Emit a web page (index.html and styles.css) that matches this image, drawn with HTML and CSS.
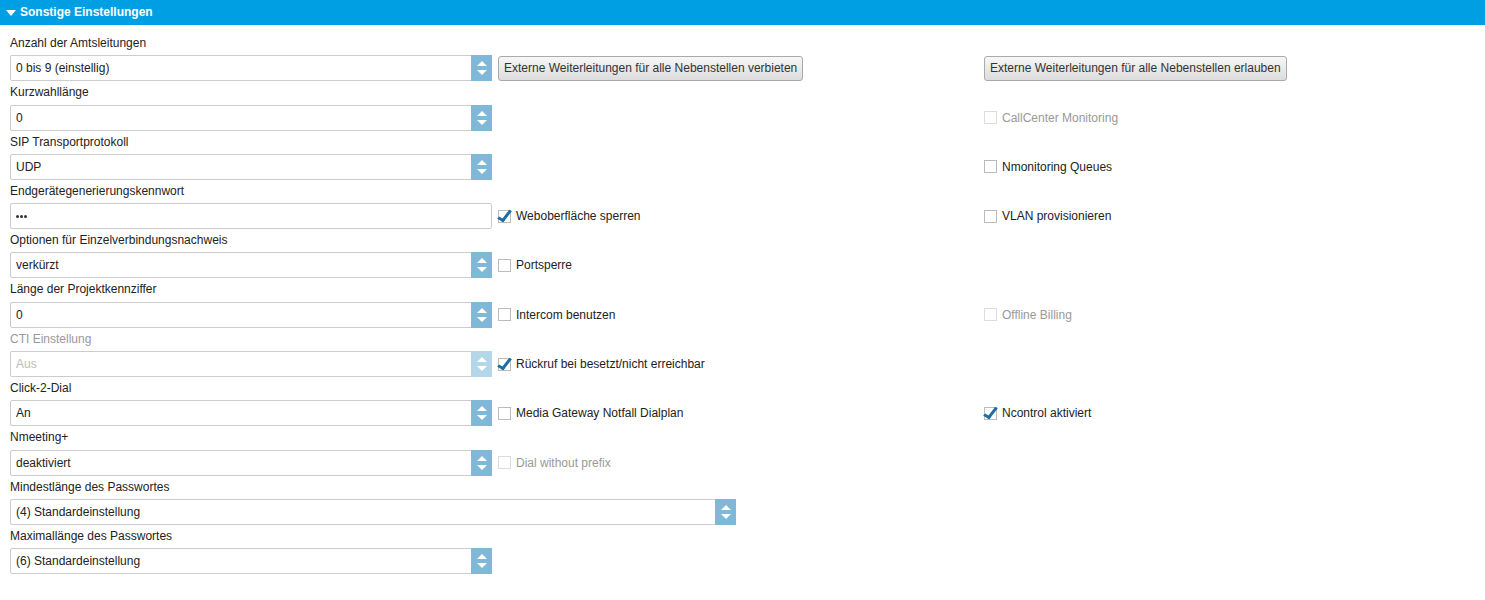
FILE: index.html
```html
<!DOCTYPE html>
<html lang="de">
<head>
    <meta charset="UTF-8">
    <title>Sonstige Einstellungen</title>
    <link rel="stylesheet" href="styles.css">
</head>
<body>

<div class="panel-head"><span class="caret"></span>Sonstige Einstellungen</div>

<div class="settings">
    <div class="row">
        <label class="lbl">Anzahl der Amtsleitungen</label>
        <div class="select"><span>0 bis 9 (einstellig)</span><i class="spin"></i></div>
        <div class="mid"><button class="btn">Externe Weiterleitungen für alle Nebenstellen verbieten</button></div>
        <div class="right"><button class="btn">Externe Weiterleitungen für alle Nebenstellen erlauben</button></div>
    </div>
    <div class="row">
        <label class="lbl">Kurzwahllänge</label>
        <div class="select"><span>0</span><i class="spin"></i></div>
        <div class="mid"></div>
        <div class="right"><span class="check disabled"><i class="box"></i>CallCenter Monitoring</span></div>
    </div>
    <div class="row">
        <label class="lbl">SIP Transportprotokoll</label>
        <div class="select"><span>UDP</span><i class="spin"></i></div>
        <div class="mid"></div>
        <div class="right"><span class="check"><i class="box"></i>Nmonitoring Queues</span></div>
    </div>
    <div class="row">
        <label class="lbl">Endgerätegenerierungskennwort</label>
        <div class="input"><span class="dots"><b></b><b></b><b></b></span></div>
        <div class="mid"><span class="check on"><i class="box"></i>Weboberfläche sperren</span></div>
        <div class="right"><span class="check"><i class="box"></i>VLAN provisionieren</span></div>
    </div>
    <div class="row">
        <label class="lbl">Optionen für Einzelverbindungsnachweis</label>
        <div class="select"><span>verkürzt</span><i class="spin"></i></div>
        <div class="mid"><span class="check"><i class="box"></i>Portsperre</span></div>
        <div class="right"></div>
    </div>
    <div class="row">
        <label class="lbl">Länge der Projektkennziffer</label>
        <div class="select"><span>0</span><i class="spin"></i></div>
        <div class="mid"><span class="check"><i class="box"></i>Intercom benutzen</span></div>
        <div class="right"><span class="check disabled"><i class="box"></i>Offline Billing</span></div>
    </div>
    <div class="row">
        <label class="lbl disabled">CTI Einstellung</label>
        <div class="select disabled"><span>Aus</span><i class="spin"></i></div>
        <div class="mid"><span class="check on"><i class="box"></i>Rückruf bei besetzt/nicht erreichbar</span></div>
        <div class="right"></div>
    </div>
    <div class="row">
        <label class="lbl">Click-2-Dial</label>
        <div class="select"><span>An</span><i class="spin"></i></div>
        <div class="mid"><span class="check"><i class="box"></i>Media Gateway Notfall Dialplan</span></div>
        <div class="right"><span class="check on"><i class="box"></i>Ncontrol aktiviert</span></div>
    </div>
    <div class="row">
        <label class="lbl">Nmeeting+</label>
        <div class="select"><span>deaktiviert</span><i class="spin"></i></div>
        <div class="mid"><span class="check disabled"><i class="box"></i>Dial without prefix</span></div>
        <div class="right"></div>
    </div>
    <div class="row">
        <label class="lbl">Mindestlänge des Passwortes</label>
        <div class="select wide"><span>(4) Standardeinstellung</span><i class="spin"></i></div>
    </div>
    <div class="row">
        <label class="lbl">Maximallänge des Passwortes</label>
        <div class="select"><span>(6) Standardeinstellung</span><i class="spin"></i></div>
    </div>
</div>

</body>
</html>
```

FILE: styles.css
```css
body {
    margin: 0;
    font-family: "Liberation Sans", Arial, sans-serif;
    font-size: 12px;
    color: #222;
    background-color: #fff;
}
.panel-head {
    height: 25px;
    line-height: 25px;
    background-color: #009fe3;
    color: #fff;
    font-weight: bold;
    padding-left: 6px;
    display: flex;
    align-items: center;
}
.caret {
    width: 0;
    height: 0;
    border-left: 5px solid transparent;
    border-right: 5px solid transparent;
    border-top: 6px solid #fff;
    margin-right: 4px;
}
.settings {
    padding: 7px 0 0 10px;
}
.row {
    display: grid;
    grid-template-columns: 482px 480px 1fr;
    grid-template-rows: 23.3px 26px;
    column-gap: 6px;
}
.lbl {
    grid-column: 1;
    grid-row: 1;
    line-height: 23.3px;
}
.lbl.disabled {
    color: #999;
}
.select, .input {
    grid-column: 1;
    grid-row: 2;
    box-sizing: border-box;
    height: 26px;
    border: 1px solid #ccc;
    border-radius: 2px;
    display: flex;
    align-items: center;
    background-color: #fff;
}
.select span, .input span {
    flex: 1;
    padding-left: 5px;
}
.select.wide {
    grid-column: 1 / span 2;
    width: 726px;
}
.select.disabled span {
    color: #bbb;
}
.dots {
    display: flex;
    gap: 1px;
}
.dots b {
    width: 3px;
    height: 3px;
    border-radius: 50%;
    background-color: #333;
}
.spin {
    align-self: stretch;
    width: 21px;
    margin: -1px -1px -1px 0;
    background-color: #7fb9d7;
    position: relative;
}
.select.disabled .spin {
    background-color: #b4d6e9;
}
.spin::before, .spin::after {
    content: "";
    position: absolute;
    left: 6px;
    border-left: 5px solid transparent;
    border-right: 5px solid transparent;
}
.spin::before {
    top: 6px;
    border-bottom: 5px solid #fff;
}
.spin::after {
    bottom: 6px;
    border-top: 5px solid #fff;
}
.mid, .right {
    grid-row: 2;
    display: flex;
    align-items: center;
}
.mid {
    grid-column: 2;
}
.right {
    grid-column: 3;
}
.btn {
    font-family: inherit;
    font-size: 12px;
    color: #333;
    height: 25px;
    padding: 0 5px;
    border: 1px solid #aaa;
    border-radius: 3px;
    background: linear-gradient(#f7f7f7, #dcdcdc);
}
.check {
    display: flex;
    align-items: center;
    color: #222;
}
.check.disabled {
    color: #999;
}
.box {
    box-sizing: border-box;
    width: 13px;
    height: 13px;
    border: 1px solid #bbb;
    background-color: #fff;
    margin-right: 5px;
    position: relative;
}
.check.disabled .box {
    border-color: #ddd;
}
.check.on .box::after {
    content: "";
    position: absolute;
    left: 2px;
    top: -3px;
    width: 4px;
    height: 11px;
    border-right: 3px solid #1f6ea3;
    border-bottom: 3px solid #1f6ea3;
    transform: rotate(38deg) skewY(-8deg);
    transform-origin: 50% 50%;
}
```
